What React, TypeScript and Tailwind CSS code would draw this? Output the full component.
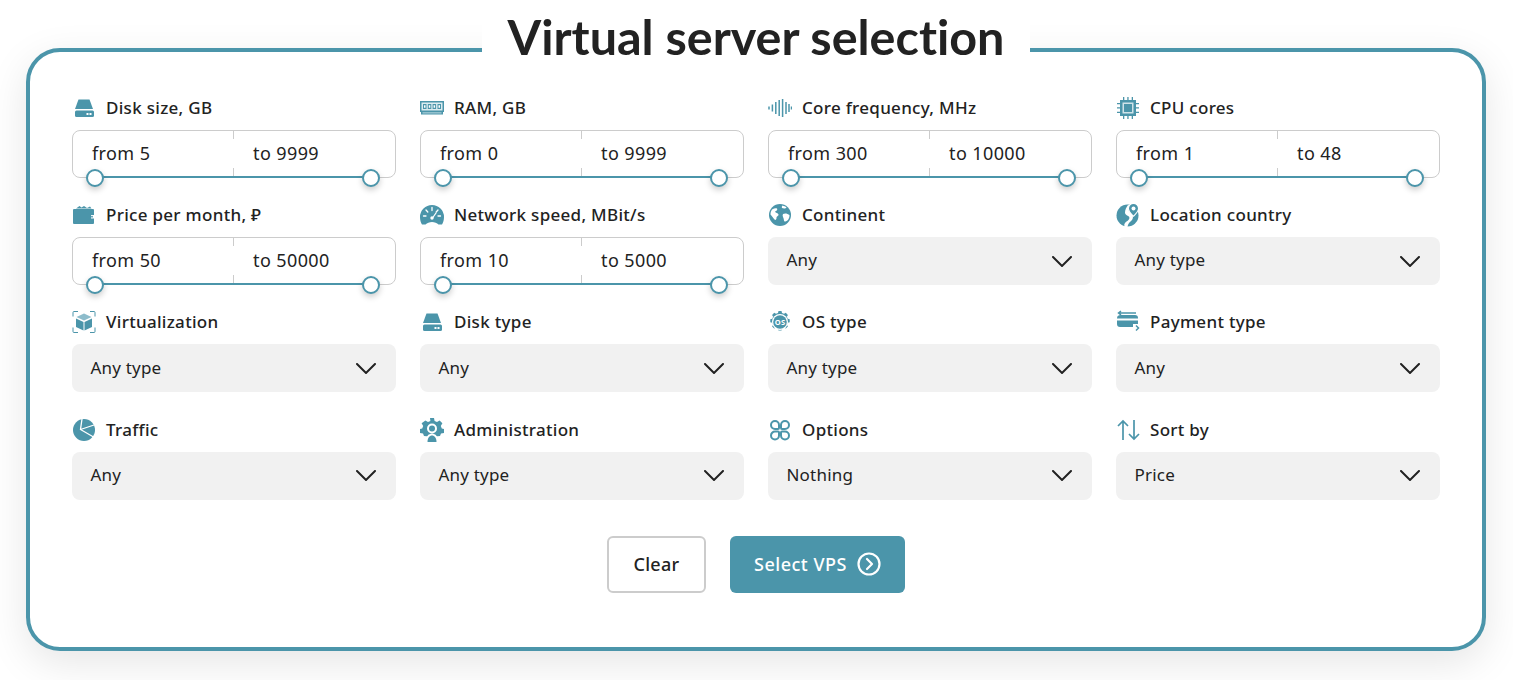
import type { ReactNode } from 'react';

const TEAL = '#4b95aa';

function Svg({ children }: { children: ReactNode }) {
  return (
    <svg viewBox="0 0 24 24" className="h-6 w-6 shrink-0" fill={TEAL}>
      {children}
    </svg>
  );
}

const DiskIcon = () => (
  <Svg>
    <path d="M6.500 3.500h11l3.500 9.500H3z" />
    <rect x="3" y="14.500" width="19" height="6.500" rx="1.500" />
    <rect x="14.500" y="17" width="2" height="2" fill="#fff" />
    <rect x="17.500" y="17" width="2" height="2" fill="#fff" />
  </Svg>
);

const RamIcon = () => (
  <Svg>
    <path d="M0 5h24v11h-1v2.500H1V16H0z" />
    <rect x="1.500" y="6.500" width="21" height="8" fill="#dcecf0" />
    <path d="M3 8h3.500v5H3zM7.800 8h3.500v5H7.800zM12.600 8h3.500v5h-3.500zM17.500 8H21v5h-3.500z" />
    <path d="M4 9.300h1.500v2.400H4zM8.800 9.300h1.500v2.400H8.800zM13.600 9.300h1.500v2.400h-1.500zM18.500 9.300H20v2.400h-1.500z" fill="#fff" />
    <path d="M2.500 16.500h19v.8h-19z" fill="#dcecf0" />
  </Svg>
);

const FreqIcon = () => (
  <svg viewBox="0 0 24 24" className="h-6 w-6 shrink-0" stroke={TEAL} strokeWidth="1.500" fill="none">
    <path d="M1 10.500v3M4.400 8.500v7M7.800 6v12M11.200 4v16M14.600 3v18M18 6v12M21 8v8M23.500 10.500v3" />
  </svg>
);

const CpuIcon = () => (
  <Svg>
    <path d="M4 4h16v16H4z" />
    <rect x="6.500" y="6.500" width="11" height="11" fill="#cfe3e9" />
    <rect x="8" y="8" width="8" height="8" />
    <path d="M7 1h1.300v3H7zM11.300 1h1.300v3h-1.300zM15.700 1H17v3h-1.300zM7 20h1.300v3H7zM11.300 20h1.300v3h-1.300zM15.700 20H17v3h-1.300zM1 7h3v1.300H1zM1 11.300h3v1.300H1zM1 15.700h3V17H1zM20 7h3v1.300h-3zM20 11.300h3v1.300h-3zM20 15.700h3V17h-3z" />
  </Svg>
);

const WalletIcon = () => (
  <Svg>
    <path d="M4 5.500 7.500 3l2 1.500L12 3l3 2 3-1.500 1.500 2z" />
    <rect x="1" y="6" width="21" height="15" rx="1" />
    <rect x="19" y="12" width="4" height="3.500" fill="#fff" />
    <circle cx="20" cy="13.700" r="0.900" fill={TEAL} />
  </Svg>
);

const GaugeIcon = () => (
  <Svg>
    <path d="M12 2a12 12 0 0 0-12 12c0 3 .8 5.500 2 7.500h3.500C7 20 9.500 19 12 19s5 1 6.500 2.500H22c1.200-2 2-4.500 2-7.500A12 12 0 0 0 12 2z" />
    <path d="M12 4.500v3M6 7l1.800 2M18 7l-1.800 2M3.500 13h2.500M18 13h2.500M12.500 15l3.500-5" stroke="#fff" strokeWidth="1.300" strokeLinecap="round" fill="none" />
    <circle cx="12" cy="15" r="1.700" fill="#fff" />
  </Svg>
);

const GlobeIcon = () => (
  <Svg>
    <circle cx="12" cy="12" r="11" />
    <path
      d="M4 6.500c2-1 3.500-1.500 5-1 1 1-.5 2.500-2 3 .5 1.500 3 1.500 3.500 3 .3 1.500-2 1.500-2 3.500 0 1.500-1 2.500-2 1.500C5 15 4 13 2.500 11.500 2.500 9.500 3 8 4 6.500zM14.500 2.500c1.500.5 3 1 4 2-1 1.500-3.500 1-4.500.5-.5-1 0-2 .5-2.500zM15 11c2-1 4.500-.5 6.500 1 0 2-.5 3.500-1.500 5-1.500 1-2.500 1.500-3.500 1.500-1-1.500-.5-3-1.500-4.500-.5-1-.5-2 0-3z"
      fill="#fff"
    />
  </Svg>
);

const LocationIcon = () => (
  <Svg>
    <circle cx="11.500" cy="12.500" r="11" />
    <path d="M9 24c-1.500-2-.5-4 1.500-5.500 2.500-1.500 3.500-3 2.500-5-1.500-1-4-1.500-4-4 0-3 1.500-5 3-7.500l2 .5c-1 2-1.500 4-1 6 1.500 1.500 4 2.500 4 5.500 0 3-2.500 4.500-4 6-1 1.500-1.500 3-1.500 4.500z" fill="#fff" />
    <path d="M17.500 0a5.500 5.500 0 0 0-5.500 5.500c0 3.500 5.500 8.500 5.500 8.500s5.500-5 5.500-8.500A5.500 5.500 0 0 0 17.500 0z" fill="#fff" />
    <path d="M17.500 1a4.500 4.500 0 0 0-4.500 4.500c0 2.700 4.500 7 4.500 7s4.500-4.300 4.500-7A4.500 4.500 0 0 0 17.500 1z" />
    <circle cx="17.500" cy="5.500" r="2" fill="#fff" />
  </Svg>
);

const VirtIcon = () => (
  <Svg>
    <path d="M6 1.500H2a1 1 0 0 0-1 1v4M18 1.500h4a1 1 0 0 1 1 1v4M6 22.500H2a1 1 0 0 1-1-1v-4M18 22.500h4a1 1 0 0 0 1-1v-4" stroke={TEAL} strokeWidth="1" fill="none" />
    <path d="M12 3.500 19.500 7 12 10.500 4.500 7z" fill="#8dbccb" />
    <path d="M4 8.500l7.500 3.500v8.500L4 17zM20 8.500 12.500 12v8.500L20 17z" />
  </Svg>
);

const PieIcon = () => (
  <Svg>
    <circle cx="12" cy="12" r="11" />
    <path d="M10 1 8.500 11.500 21.500 19M8.500 11.500 22 7" stroke="#fff" strokeWidth="1.300" fill="none" />
  </Svg>
);

const AdminIcon = () => (
  <Svg>
    <path d="M10 0h4l.6 3 2.400 1 2.600-1.600 2.800 2.800L20.800 8l1 2.400 2.200.6v4l-3 .6-1 2.400-5 .5-6 0-5-.5-1-2.400-3-.6v-4l2.200-.6 1-2.400-1.600-2.800L5.400 2.400 8 4l2.400-1z" />
    <circle cx="12" cy="10.500" r="5" fill="#fff" />
    <circle cx="12" cy="10.500" r="3" />
    <path d="M5.500 24c0-5 3-8.500 6.500-8.500s6.500 3.500 6.500 8.500z" fill="#fff" />
    <path d="M7.500 24c0-4 2-6.500 4.500-6.500s4.500 2.500 4.500 6.500z" />
  </Svg>
);

const OsIcon = () => (
  <Svg>
    <path d="M10.500 1h3l.5 2 2 .8 1.800-1 2.100 2.100-1 1.800.8 2 2 .5v3l-2 .5-.8 2 1 1.800-2.100 2.100-1.800-1-2 .8-.5 2h-3l-.5-2-2-.8-1.800 1-2.100-2.100 1-1.800-.8-2-2-.5v-3l2-.5.8-2-1-1.800 2.100-2.100 1.800 1 2-.8z" />
    <circle cx="12" cy="12" r="8" fill="#fff" />
    <circle cx="12" cy="12" r="6.800" />
    <text x="12" y="14.600" textAnchor="middle" fontSize="7.500" fontWeight="700" fontFamily="Noto Sans, sans-serif" fill="#fff">
      OS
    </text>
  </Svg>
);

const OptionsIcon = () => (
  <svg viewBox="0 0 24 24" className="h-6 w-6 shrink-0" stroke={TEAL} strokeWidth="2" fill="none">
    <path d="M3 7a4 4 0 0 1 8 0v3a1 1 0 0 1-1 1H7a4 4 0 0 1-4-4zM13 7a4 4 0 1 1 4 4h-3a1 1 0 0 1-1-1zM3 17.500a4 4 0 0 1 4-4h3a1 1 0 0 1 1 1v3a4 4 0 1 1-8 0zM13 14.500a1 1 0 0 1 1-1h3a4 4 0 1 1-4 4z" />
  </svg>
);

const PaymentIcon = () => (
  <Svg>
    <path d="M5 5h14a3 3 0 0 1 3 3v.5H1V8a3 3 0 0 1 2-2.800z" />
    <path d="M1 10.500h21V14h-5v3H4a3 3 0 0 1-3-3z" />
    <path d="M5 1 2.500 3 5 5M3 3h17M20 15.500l2.500 2.500-2.500 2.500" stroke={TEAL} strokeWidth="1.500" fill="none" />
  </Svg>
);

const SortIcon = () => (
  <svg viewBox="0 0 24 24" className="h-6 w-6 shrink-0" stroke={TEAL} strokeWidth="1.700" fill="none">
    <path d="M7 22V3M2 8l5-5 5 5M18 2v19M13 16l5 5 5-5" />
  </svg>
);

const Chevron = () => (
  <svg viewBox="0 0 20 11" className="h-[11px] w-5 shrink-0" fill="none" stroke="#222" strokeWidth="2" strokeLinecap="round">
    <path d="M1 1l9 9 9-9" />
  </svg>
);

function Label({ icon, text }: { icon: ReactNode; text: string }) {
  return (
    <div className="flex h-6 items-center gap-[10px] text-[17px] font-medium leading-6 tracking-[0.3px] text-[#222]">
      {icon}
      <span>{text}</span>
    </div>
  );
}

function RangeField({ icon, label, from, to }: { icon: ReactNode; label: string; from: number; to: number }) {
  return (
    <div>
      <Label icon={icon} text={label} />
      <div className="relative mt-[10px] h-12 rounded-lg border border-[#ccc] text-[18px] tracking-[0.4px] text-[#222]">
        <div className="grid h-full grid-cols-2 items-center pb-[2px]">
          <span className="pl-[19px]">from {from}</span>
          <span className="pl-[19px]">to {to}</span>
        </div>
        <span className="absolute left-[160px] top-0 h-2 w-px bg-[#ccc]" />
        <span className="absolute bottom-0 left-[160px] h-[9px] w-px bg-[#ccc]" />
        <span className="absolute bottom-[-1px] left-[22px] right-[24px] h-[2px] bg-[#4b95aa]" />
        <span className="absolute bottom-[-10px] left-[13px] h-[18px] w-[18px] rounded-full border-2 border-[#4b95aa] bg-white shadow-[0_3px_6px_rgba(0,0,0,0.2)]" />
        <span className="absolute bottom-[-10px] right-[15px] h-[18px] w-[18px] rounded-full border-2 border-[#4b95aa] bg-white shadow-[0_3px_6px_rgba(0,0,0,0.2)]" />
      </div>
    </div>
  );
}

function SelectField({ icon, label, value }: { icon: ReactNode; label: string; value: string }) {
  return (
    <div>
      <Label icon={icon} text={label} />
      <div className="mt-[10px] flex h-12 items-center justify-between rounded-lg bg-[#f1f1f1] pl-[18.5px] pr-[20px] text-[17px] tracking-[0.2px] text-[#222]">
        <span className="pb-[2px]">{value}</span>
        <Chevron />
      </div>
    </div>
  );
}

export default function App() {
  return (
    <div className="h-[680px] overflow-hidden bg-white pt-12 font-['Noto_Sans',sans-serif]">
      <div className="relative ml-[26px] h-[603px] w-[1460px] rounded-[34px] border-4 border-[#4b95aa] bg-white px-[42px] pt-[44px] shadow-[0_12px_40px_rgba(0,0,0,0.1)]">
        <h1 className="absolute -top-[46px] left-1/2 w-[548px] -translate-x-1/2 bg-white text-center font-['Lato',sans-serif] text-[48.5px] font-bold leading-[60px] text-[#222] [font-variant-ligatures:none]">
          Virtual server selection
        </h1>

        <div className="grid grid-cols-4 gap-x-6 gap-y-[25.2px]">
          <RangeField icon={<DiskIcon />} label="Disk size, GB" from={5} to={9999} />
          <RangeField icon={<RamIcon />} label="RAM, GB" from={0} to={9999} />
          <RangeField icon={<FreqIcon />} label="Core frequency, MHz" from={300} to={10000} />
          <RangeField icon={<CpuIcon />} label="CPU cores" from={1} to={48} />

          <RangeField icon={<WalletIcon />} label="Price per month, ₽" from={50} to={50000} />
          <RangeField icon={<GaugeIcon />} label="Network speed, MBit/s" from={10} to={5000} />
          <SelectField icon={<GlobeIcon />} label="Continent" value="Any" />
          <SelectField icon={<LocationIcon />} label="Location country" value="Any type" />

          <SelectField icon={<VirtIcon />} label="Virtualization" value="Any type" />
          <SelectField icon={<DiskIcon />} label="Disk type" value="Any" />
          <SelectField icon={<OsIcon />} label="OS type" value="Any type" />
          <SelectField icon={<PaymentIcon />} label="Payment type" value="Any" />

          <SelectField icon={<PieIcon />} label="Traffic" value="Any" />
          <SelectField icon={<AdminIcon />} label="Administration" value="Any type" />
          <SelectField icon={<OptionsIcon />} label="Options" value="Nothing" />
          <SelectField icon={<SortIcon />} label="Sort by" value="Price" />
        </div>

        <div className="mt-9 flex justify-center gap-6">
          <button className="h-[57px] w-[99px] rounded-md border-2 border-[#ccc] bg-white text-[18px] font-medium tracking-[0.3px] text-[#222]">
            Clear
          </button>
          <button className="flex h-[57px] w-[175px] items-center justify-center gap-[10px] rounded-md bg-[#4b95aa] text-[18px] font-medium tracking-[0.5px] text-white">
            Select VPS
            <svg viewBox="0 0 24 24" className="h-6 w-6" fill="none" stroke="#fff" strokeWidth="2.200">
              <circle cx="12" cy="12" r="10.500" />
              <path d="M10 7l5 5-5 5" strokeLinecap="round" strokeLinejoin="round" />
            </svg>
          </button>
        </div>
      </div>
    </div>
  );
}
